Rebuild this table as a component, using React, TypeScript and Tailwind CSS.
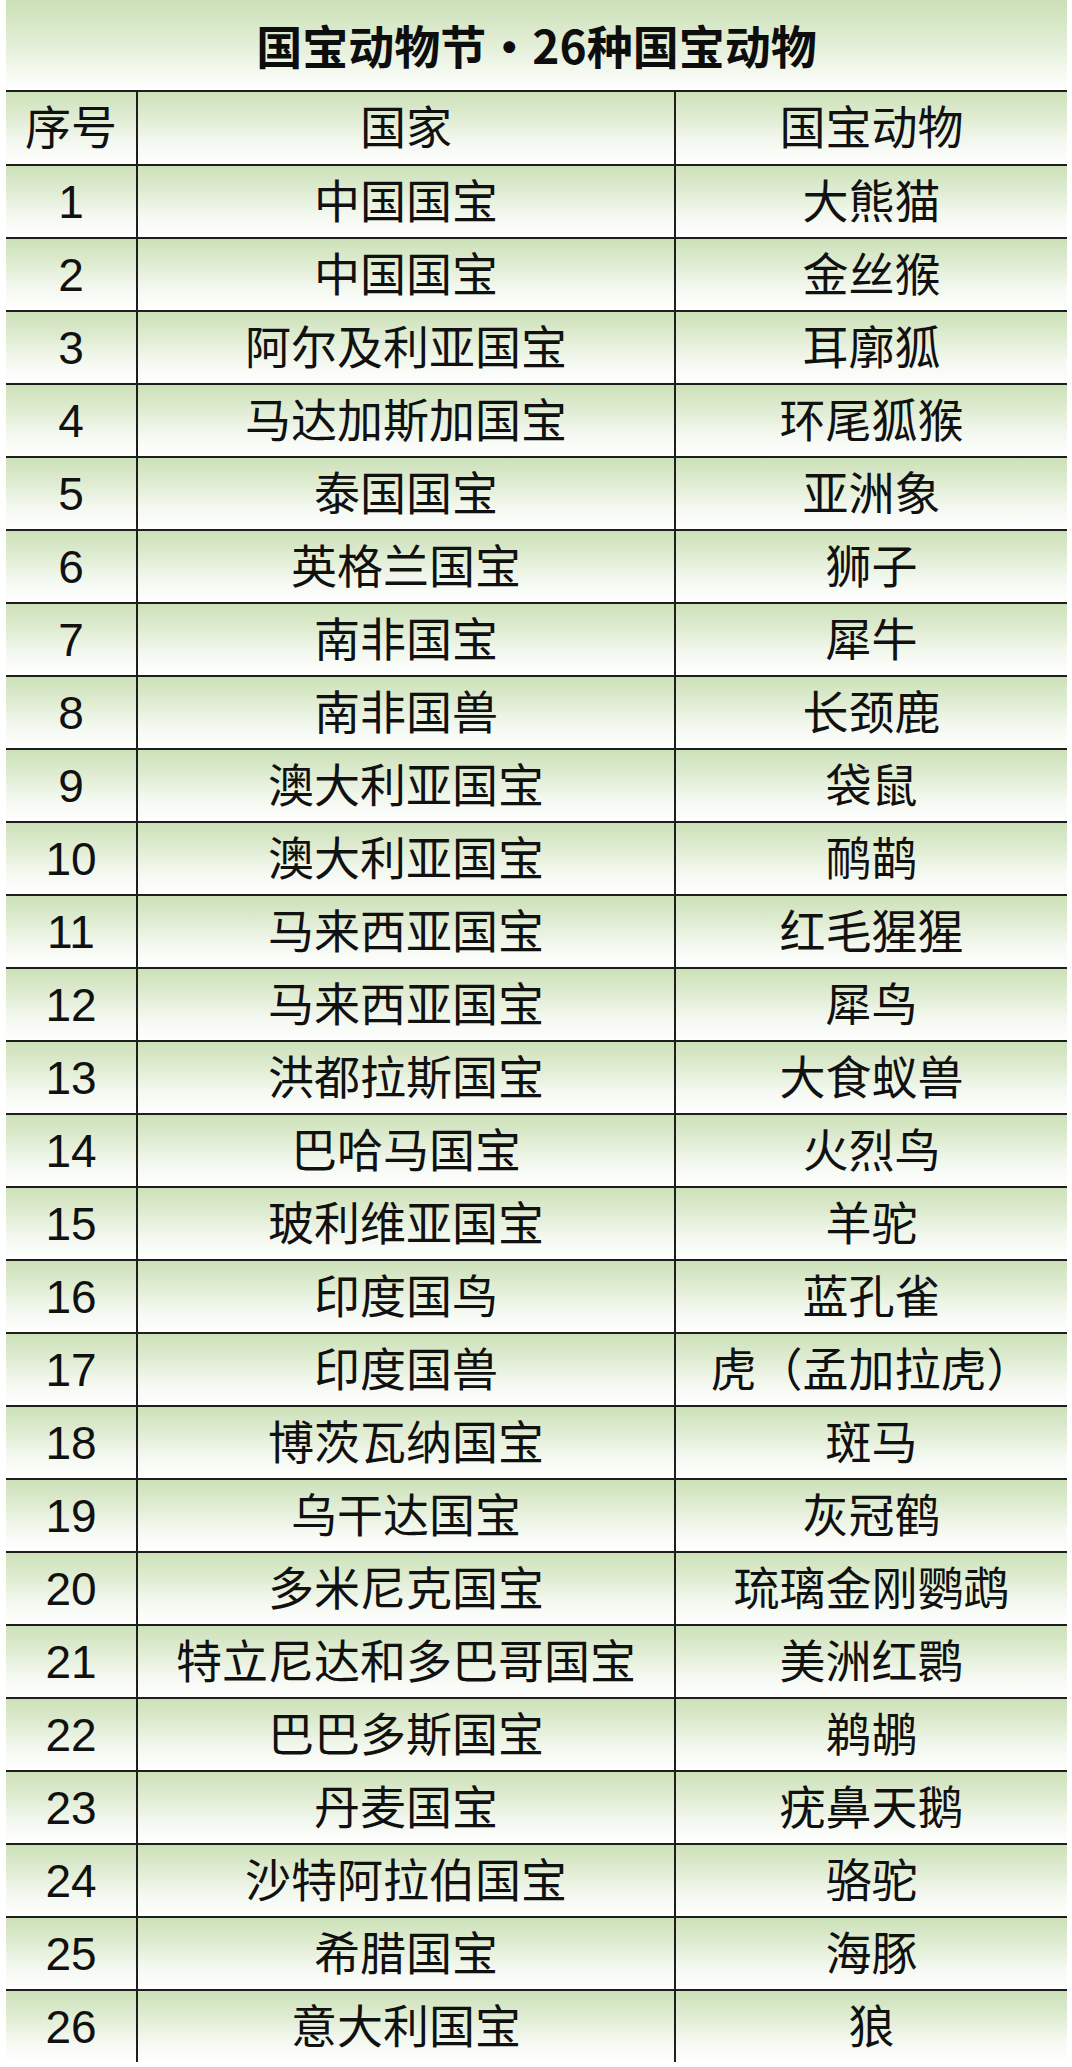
const rows: [string, string][] = [
  ["中国国宝", "大熊猫"],
  ["中国国宝", "金丝猴"],
  ["阿尔及利亚国宝", "耳廓狐"],
  ["马达加斯加国宝", "环尾狐猴"],
  ["泰国国宝", "亚洲象"],
  ["英格兰国宝", "狮子"],
  ["南非国宝", "犀牛"],
  ["南非国兽", "长颈鹿"],
  ["澳大利亚国宝", "袋鼠"],
  ["澳大利亚国宝", "鸸鹋"],
  ["马来西亚国宝", "红毛猩猩"],
  ["马来西亚国宝", "犀鸟"],
  ["洪都拉斯国宝", "大食蚁兽"],
  ["巴哈马国宝", "火烈鸟"],
  ["玻利维亚国宝", "羊驼"],
  ["印度国鸟", "蓝孔雀"],
  ["印度国兽", "虎（孟加拉虎）"],
  ["博茨瓦纳国宝", "斑马"],
  ["乌干达国宝", "灰冠鹤"],
  ["多米尼克国宝", "琉璃金刚鹦鹉"],
  ["特立尼达和多巴哥国宝", "美洲红鹮"],
  ["巴巴多斯国宝", "鹈鹕"],
  ["丹麦国宝", "疣鼻天鹅"],
  ["沙特阿拉伯国宝", "骆驼"],
  ["希腊国宝", "海豚"],
  ["意大利国宝", "狼"],
]

// soft green-to-white band used behind every row
const band =
  "bg-[linear-gradient(to_bottom,#cce1b8_0%,#dfecd2_35%,#f3f8ef_68%,#ffffff_100%)]"

function Row({ cells, header = false }: { cells: string[]; header?: boolean }) {
  return (
    <div
      className={`grid grid-cols-[130px_538px_1fr] border-t-2 border-[#1e1e1e] ${band} ${
        header ? "h-[74px]" : "h-[73px]"
      }`}
    >
      <div className="flex items-center justify-center">{cells[0]}</div>
      <div className="flex items-center justify-center border-l-2 border-[#1e1e1e]">{cells[1]}</div>
      <div className="flex items-center justify-center border-l-2 border-[#1e1e1e]">{cells[2]}</div>
    </div>
  )
}

export default function App() {
  return (
    <div className="w-[1072px] h-[2067px] bg-white pl-[6px] pr-[5px]">
      {/* Title band */}
      <div
        className="h-[90px] flex items-center justify-center pb-[2px] text-[46px] font-bold text-[#0d0d0d] bg-[linear-gradient(to_bottom,#cbe0b6_0%,#e0edd4_45%,#f7fbf4_85%,#ffffff_100%)]"
        style={{ fontFamily: '"Noto Sans CJK SC", sans-serif' }}
      >
        国宝动物节・26种国宝动物
      </div>

      <div
        className="text-[46px] text-[#111] leading-none"
        style={{ fontFamily: '"Liberation Sans", "Noto Sans CJK SC", sans-serif' }}
      >
        <Row header cells={["序号", "国家", "国宝动物"]} />
        {rows.map(([country, animal], i) => (
          <Row key={i} cells={[String(i + 1), country, animal]} />
        ))}
      </div>
    </div>
  )
}
